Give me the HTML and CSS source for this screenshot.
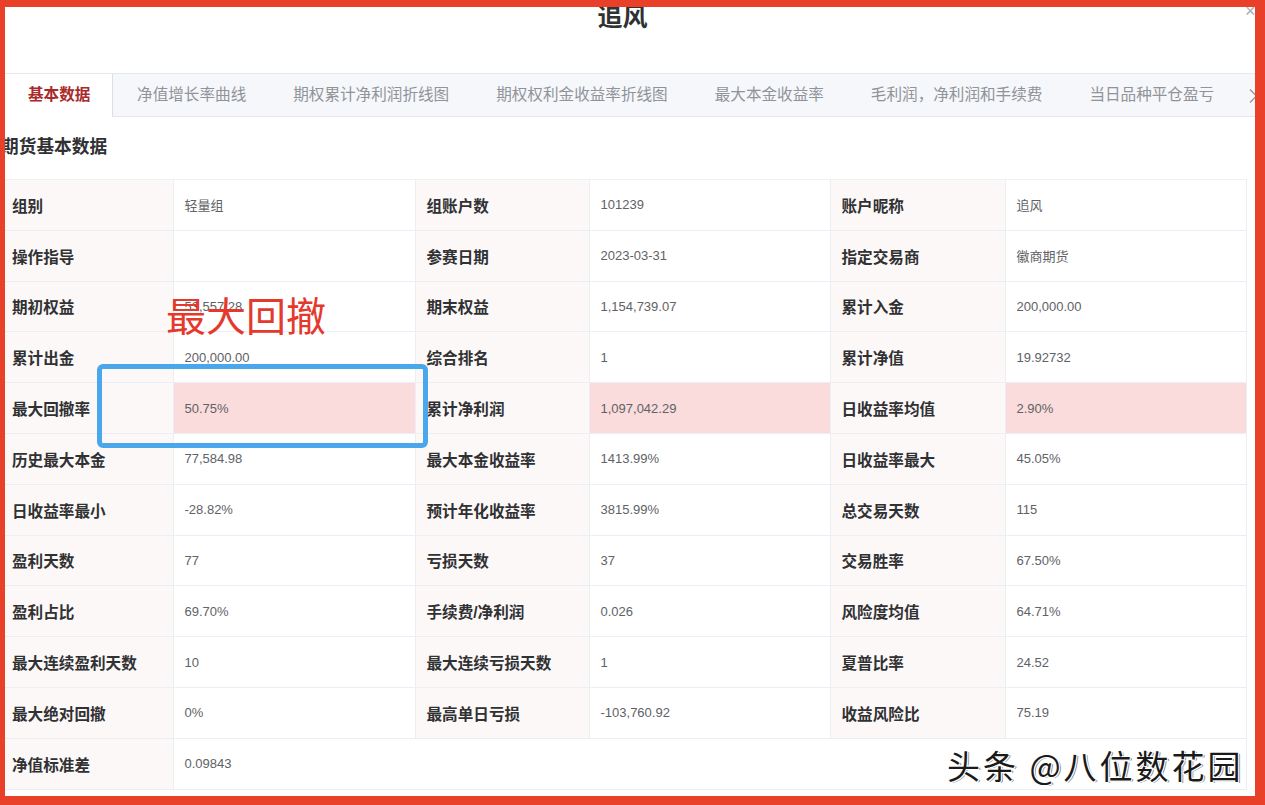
FILE: index.html
```html
<!DOCTYPE html>
<html lang="zh-CN">
<head>
    <meta charset="UTF-8">
    <title>追风</title>
    <link rel="stylesheet" href="styles.css">
</head>
<body>
    <div class="dialog">
        <div class="dialog-header">
            <span class="dialog-title">追风</span>
            <span class="dialog-close">×</span>
        </div>
        <div class="tabs">
            <div class="tab active">基本数据</div>
            <div class="tab">净值增长率曲线</div>
            <div class="tab">期权累计净利润折线图</div>
            <div class="tab">期权权利金收益率折线图</div>
            <div class="tab">最大本金收益率</div>
            <div class="tab">毛利润，净利润和手续费</div>
            <div class="tab">当日品种平仓盈亏</div>
            <span class="tab-next">
                <svg width="10" height="16" viewBox="0 0 10 16"><path d="M2 1.5 L8.5 8 L2 14.5" fill="none" stroke="#909399" stroke-width="1.2"/></svg>
            </span>
        </div>
        <h3 class="section-title">期货基本数据</h3>
        <table class="info">
            <colgroup>
                <col class="c-label1"><col class="c-val1">
                <col class="c-label2"><col class="c-val2">
                <col class="c-label3"><col class="c-val3">
            </colgroup>
            <tr><td class="lbl">组别</td><td>轻量组</td><td class="lbl">组账户数</td><td>101239</td><td class="lbl">账户昵称</td><td>追风</td></tr>
            <tr><td class="lbl">操作指导</td><td></td><td class="lbl">参赛日期</td><td>2023-03-31</td><td class="lbl">指定交易商</td><td>徽商期货</td></tr>
            <tr><td class="lbl">期初权益</td><td>53,557.28</td><td class="lbl">期末权益</td><td>1,154,739.07</td><td class="lbl">累计入金</td><td>200,000.00</td></tr>
            <tr><td class="lbl">累计出金</td><td>200,000.00</td><td class="lbl">综合排名</td><td>1</td><td class="lbl">累计净值</td><td>19.92732</td></tr>
            <tr class="hot"><td class="lbl">最大回撤率</td><td>50.75%</td><td class="lbl">累计净利润</td><td>1,097,042.29</td><td class="lbl">日收益率均值</td><td>2.90%</td></tr>
            <tr><td class="lbl">历史最大本金</td><td>77,584.98</td><td class="lbl">最大本金收益率</td><td>1413.99%</td><td class="lbl">日收益率最大</td><td>45.05%</td></tr>
            <tr><td class="lbl">日收益率最小</td><td>-28.82%</td><td class="lbl">预计年化收益率</td><td>3815.99%</td><td class="lbl">总交易天数</td><td>115</td></tr>
            <tr><td class="lbl">盈利天数</td><td>77</td><td class="lbl">亏损天数</td><td>37</td><td class="lbl">交易胜率</td><td>67.50%</td></tr>
            <tr><td class="lbl">盈利占比</td><td>69.70%</td><td class="lbl">手续费/净利润</td><td>0.026</td><td class="lbl">风险度均值</td><td>64.71%</td></tr>
            <tr><td class="lbl">最大连续盈利天数</td><td>10</td><td class="lbl">最大连续亏损天数</td><td>1</td><td class="lbl">夏普比率</td><td>24.52</td></tr>
            <tr><td class="lbl">最大绝对回撤</td><td>0%</td><td class="lbl">最高单日亏损</td><td>-103,760.92</td><td class="lbl">收益风险比</td><td>75.19</td></tr>
            <tr><td class="lbl">净值标准差</td><td colspan="5">0.09843</td></tr>
        </table>
    </div>

    <!-- hand-drawn marks on top of the screenshot -->
    <div class="note-text">最大回撤</div>
    <div class="note-box"></div>
    <div class="watermark">头条 @八位数花园</div>
    <div class="frame"></div>
</body>
</html>
```

FILE: styles.css
```css
body {
    margin: 0;
    background: #fff;
    font-family: "Liberation Sans", "Noto Sans CJK SC", sans-serif;
    color: #303133;
    overflow: hidden;
}
.dialog {
    position: relative;
    width: 1265px;
}
.dialog-header {
    height: 73px;
    width: 1245px;
    text-align: center;
}
.dialog-title {
    display: inline-block;
    font-size: 25px;
    line-height: 34px;
    font-weight: 600;
    color: #303133;
}
.dialog-close {
    position: absolute;
    top: 1px;
    left: 1245px;
    font-size: 18px;
    color: #a8abb2;
}
.tabs {
    position: relative;
    display: flex;
    margin-left: 5px;
    height: 42px;
    background: #f5f7fa;
    border-top: 1px solid #e4e7ed;
    border-bottom: 1px solid #e4e7ed;
}
.tab {
    padding: 0 23.3px 0 23.7px;
    line-height: 42px;
    font-size: 15.6px;
    color: #909399;
    white-space: nowrap;
}
.tab.active {
    background: #fff;
    color: #a92a2a;
    font-weight: 600;
    padding: 0 22px 0 23px;
    border-right: 1px solid #dcdfe6;
    margin-bottom: -1px;
    height: 43px;
}
.tab-next {
    position: absolute;
    left: 1239px;
    top: 14px;
    width: 22px;
    height: 16px;
    background: #f5f7fa;
    padding-left: 4px;
}
.section-title {
    margin: 0 0 0 1px;
    padding: 18px 0 20px;
    font-size: 17.7px;
    line-height: 24px;
    font-weight: 700;
    color: #303133;
}
.info {
    margin-left: 5px;
    border-collapse: collapse;
    table-layout: fixed;
    width: 1241px;
}
.c-label1 { width: 168px; }
.c-val1 { width: 242px; }
.c-label2 { width: 174px; }
.c-val2 { width: 241px; }
.c-label3 { width: 175px; }
.c-val3 { width: 241px; }
.info td {
    height: 49.8px;
    padding: 0 0 0 11px;
    border: 1px solid #ebeef5;
    font-size: 13px;
    color: #606266;
    white-space: nowrap;
}
.info td.lbl {
    background: #fdf8f8;
    font-size: 15.6px;
    font-weight: 600;
    color: #303133;
    padding-left: 11px;
}
.info td.lbl:first-child {
    padding-left: 7px;
    border-left: none;
}
.info tr:first-child td {
    border-top: 1px solid #f0f1f4;
}
.info tr.hot td {
    background: #fadcdd;
}
.info tr.hot td.lbl {
    background: #fdf8f8;
}
.note-text {
    position: absolute;
    left: 166px;
    top: 288px;
    font-family: "Noto Sans CJK SC", sans-serif;
    font-size: 40px;
    line-height: 52px;
    color: #e4392d;
}
.note-box {
    position: absolute;
    left: 97px;
    top: 364px;
    width: 321px;
    height: 74px;
    border: 5px solid #4aa7ec;
    border-radius: 6px;
}
.watermark {
    position: absolute;
    left: 947px;
    top: 742px;
    font-family: "Noto Sans CJK SC", sans-serif;
    font-size: 33px;
    line-height: 46px;
    letter-spacing: 3px;
    color: #1a1a1a;
    text-shadow: 1px 1px 0 #fff, -1px -1px 0 #fff, 1px -1px 0 #fff, -1px 1px 0 #fff, 2px 1px 0 #888;
}
.frame {
    position: fixed;
    top: 0;
    left: 0;
    right: 0;
    bottom: 0;
    border-style: solid;
    border-color: #e9402a;
    border-width: 7px 10px 9px 5px;
    pointer-events: none;
}
```
